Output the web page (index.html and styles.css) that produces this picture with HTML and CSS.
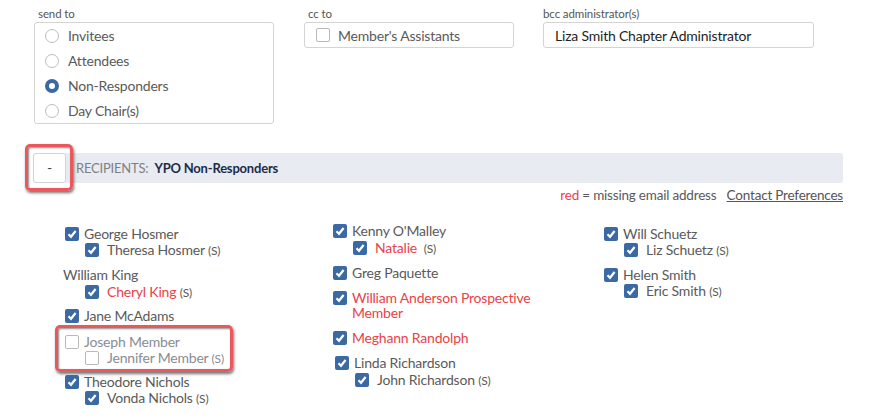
FILE: index.html
```html
<!DOCTYPE html>
<html>
<head>
<meta charset="utf-8">
<link rel="stylesheet" href="styles.css">
</head>
<body>
<div class="top">
  <div class="field f-send">
    <div class="lbl">send to</div>
    <div class="box radios">
      <div class="radio-row"><span class="radio"></span><span>Invitees</span></div>
      <div class="radio-row"><span class="radio"></span><span>Attendees</span></div>
      <div class="radio-row"><span class="radio on"></span><span>Non-Responders</span></div>
      <div class="radio-row"><span class="radio"></span><span>Day Chair(s)</span></div>
    </div>
  </div>
  <div class="field f-cc">
    <div class="lbl">cc to</div>
    <div class="box single"><span class="cb"></span><span class="cc-text">Member's Assistants</span></div>
  </div>
  <div class="field f-bcc">
    <div class="lbl">bcc administrator(s)</div>
    <div class="box single bcc">Liza Smith Chapter Administrator</div>
  </div>
</div>

<div class="rec-bar">
  <div class="toggle">-</div>
  <span class="rec-label">RECIPIENTS:</span>
  <span class="rec-name">YPO Non-Responders</span>
  <div class="hl hl-toggle"></div>
</div>

<div class="legend"><span class="red">red</span>&nbsp;= missing email address <a class="prefs">Contact Preferences</a></div>

<div class="cols">
  <div class="col">
    <div class="grp">
      <div class="row"><span class="cb on"></span><span>George Hosmer</span></div>
      <div class="row sub"><span class="cb on"></span><span>Theresa Hosmer <small>(S)</small></span></div>
    </div>
    <div class="grp g8">
      <div class="row nocb"><span>William King</span></div>
      <div class="row sub s1"><span class="cb on"></span><span><span class="red">Cheryl King</span> <small>(S)</small></span></div>
    </div>
    <div class="grp g10">
      <div class="row"><span class="cb on"></span><span>Jane McAdams</span></div>
    </div>
    <div class="grp g8 dim">
      <div class="row"><span class="cb"></span><span>Joseph Member</span></div>
      <div class="row sub"><span class="cb"></span><span>Jennifer Member <small>(S)</small></span></div>
      <div class="hl hl-joseph"></div>
    </div>
    <div class="grp">
      <div class="row"><span class="cb on"></span><span>Theodore Nichols</span></div>
      <div class="row sub"><span class="cb on"></span><span>Vonda Nichols <small>(S)</small></span></div>
    </div>
  </div>
  <div class="col col2">
    <div class="grp">
      <div class="row"><span class="cb on"></span><span>Kenny O'Malley</span></div>
      <div class="row sub s1"><span class="cb on"></span><span><span class="red">Natalie</span>&nbsp; <small>(S)</small></span></div>
    </div>
    <div class="grp">
      <div class="row"><span class="cb on"></span><span>Greg Paquette</span></div>
    </div>
    <div class="grp g10">
      <div class="row wrap"><span class="cb on"></span><span class="red">William Anderson Prospective Member</span></div>
    </div>
    <div class="grp">
      <div class="row"><span class="cb on"></span><span class="red">Meghann Randolph</span></div>
    </div>
    <div class="grp shift">
      <div class="row"><span class="cb on"></span><span>Linda Richardson</span></div>
      <div class="row sub s1"><span class="cb on"></span><span>John Richardson <small>(S)</small></span></div>
    </div>
  </div>
  <div class="col col3">
    <div class="grp">
      <div class="row"><span class="cb on"></span><span>Will Schuetz</span></div>
      <div class="row sub"><span class="cb on"></span><span>Liz Schuetz <small>(S)</small></span></div>
    </div>
    <div class="grp">
      <div class="row"><span class="cb on"></span><span>Helen Smith</span></div>
      <div class="row sub"><span class="cb on"></span><span>Eric Smith <small>(S)</small></span></div>
    </div>
  </div>
</div>
</body>
</html>
```

FILE: styles.css
```css
* { box-sizing: border-box; }
body {
  margin: 0;
  font-family: Lato, "Open Sans", sans-serif;
  font-size: 14px;
  letter-spacing: -0.2px;
  color: #5a5a5a;
  background: #fff;
}
.top {
  display: flex;
  padding: 6px 0 0 34px;
}
.field { display: flex; flex-direction: column; }
.f-send { width: 240px; }
.f-cc { width: 210px; margin-left: 30px; }
.f-bcc { width: 271px; margin-left: 29px; }
.lbl {
  font-size: 11.5px;
  line-height: 16px;
  color: #555;
  padding-left: 4px;
  letter-spacing: -0.1px;
}
.f-bcc .lbl { padding-left: 0; }
.box {
  border: 1px solid #d4d4d4;
  border-radius: 3px;
  background: #fff;
}
.radios { padding: 0 0 0 10px; }
.radio-row {
  display: flex;
  align-items: center;
  height: 25px;
  gap: 9px;
  line-height: 16px;
}
.radio {
  width: 14px; height: 14px;
  border: 1px solid #bdbdbd;
  border-radius: 50%;
  background: #fff;
  flex: none;
}
.radio.on {
  border: 4.5px solid #3b69a3;
  background: #fff;
}
.single {
  height: 26px;
  display: flex;
  align-items: center;
  padding-left: 11px;
}
.cc-text { margin-left: 8px; }
.bcc { color: #1e1e1e; padding-left: 11px; }
.cb {
  width: 14px; height: 14px;
  flex: none;
  border: 1px solid #b9b9b9;
  border-radius: 2px;
  background: #fff;
  display: inline-block;
}
.cb.on {
  border: none;
  background: #3b69a3 url("data:image/svg+xml;utf8,<svg xmlns='http://www.w3.org/2000/svg' width='14' height='14'><path d='M3.5 7.3 L6 9.8 L10.6 4' fill='none' stroke='white' stroke-width='2.2'/></svg>") no-repeat center;
}
.rec-bar {
  position: relative;
  margin: 29px 34px 0 33px;
  height: 30px;
  background: #e8ebf2;
  border-radius: 3px;
  display: flex;
  align-items: center;
}
.toggle {
  width: 33px; height: 30px;
  border: 1px solid #d4d4d4;
  border-radius: 3px;
  background: #fff;
  display: flex;
  align-items: center;
  justify-content: center;
  color: #444;
  font-size: 14px;
  margin-top: -1px;
}
.rec-label {
  margin-left: 10px;
  font-size: 13px;
  color: #808080;
}
.rec-name {
  margin-left: 6px;
  font-size: 13px;
  font-weight: bold;
  color: #1f2b45;
}
.hl {
  position: absolute;
  border: 3px solid #e8585c;
  border-radius: 5px;
  box-shadow: 1px 2px 3px rgba(0,0,0,.55), inset 1px 1px 2px rgba(0,0,0,.45);
  pointer-events: none;
}
.hl-toggle { left: -8px; top: -9px; width: 48px; height: 47px; }
.legend {
  margin: 4px 34px 0 0;
  text-align: right;
  line-height: 17px;
  font-size: 13.5px;
  color: #5a5a5a;
}
.red { color: #e8424a; }
.prefs {
  margin-left: 7px;
  text-decoration: underline;
  color: #555;
}
.cols {
  display: grid;
  grid-template-columns: 268px 271px auto;
  padding: 22px 0 0 65px;
}
.col2 { margin-top: -3px; }
.grp { margin-bottom: 9px; position: relative; }
.grp.g8 { margin-bottom: 8px; }
.grp.g10 { margin-bottom: 10px; }
.row {
  display: flex;
  align-items: center;
  gap: 5px;
  height: 16px;
  line-height: 16px;
}
.row.sub { margin-left: 20px; gap: 8px; }
.row.s1 { margin-top: 1px; }
.row.nocb { margin-left: -2px; }
.row.wrap { align-items: flex-start; height: auto; }
.row.wrap .cb { margin-top: 1px; }
.row.wrap span:last-child { line-height: 15px; width: 200px; }
.shift { margin-left: 2px; }
small { font-size: 12px; }
.dim { color: #888c94; }
.hl-joseph { left: -10px; top: -9px; width: 178px; height: 47px; }
```
